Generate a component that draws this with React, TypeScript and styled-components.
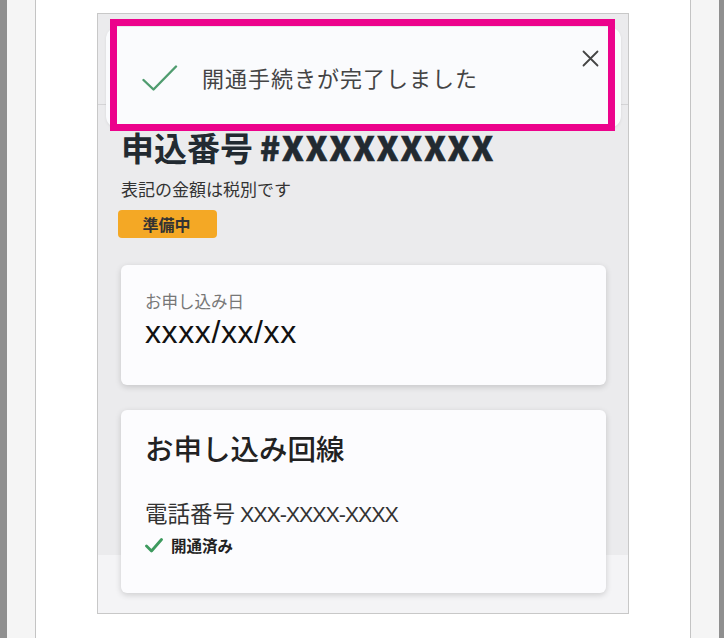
import styled, { createGlobalStyle } from "styled-components";

const GlobalStyle = createGlobalStyle`
    html, body {
        margin: 0;
        padding: 0;
        width: 724px;
        height: 638px;
        overflow: hidden;
        background: #ffffff;
        font-family: "Noto Sans CJK JP", "Noto Sans", sans-serif;
    }
`

const Screen = styled.div`
    display: flex;
    width: 724px;
    height: 638px;
`

const Strip = styled.div<{ $w: number }>`
    width: ${p => p.$w}px;
    flex: none;
    background: #8f8f8f;
`

const Gutter = styled.div<{ $side: "left" | "right" }>`
    width: 28px;
    flex: none;
    background: #f5f5f5;
    border-${p => p.$side === "left" ? "right" : "left"}: 1px solid #c4c4c4;
`

const Canvas = styled.div`
    flex: 1;
    background: #ffffff;
    padding: 13px 0 0 61px;
`

const Frame = styled.div`
    position: relative;
    width: 530px;
    height: 599px;
    border: 1px solid #c8c8c8;
    background: linear-gradient(#ebebed 541px, #f4f4f6 541px);
    overflow: hidden;
`

const Header = styled.div`
    height: 90px;
    border-bottom: 1px solid #d4d4d6;
`

const Content = styled.div`
    display: flex;
    flex-direction: column;
    align-items: flex-start;
    padding: 22px 21px 0 23px;
`

const Title = styled.h1`
    margin: 0;
    font-size: 33px;
    line-height: 40px;
    font-weight: 700;
    color: #222a31;

    span {
        margin-left: 7px;
        font-weight: 900;
        letter-spacing: 2px;
        -webkit-text-stroke: 0.6px #222a31;
    }
`

const Note = styled.p`
    margin: 10px 0 0;
    font-size: 17px;
    line-height: 24px;
    color: #333333;
`

const Badge = styled.div`
    margin: 9px 0 0 -3px;
    width: 99px;
    height: 28px;
    border-radius: 4px;
    background: #f4a825;
    color: #333333;
    font-size: 16px;
    font-weight: 700;
    display: flex;
    align-items: center;
    justify-content: center;
    padding-right: 2px;
    box-sizing: border-box;
`

const Card = styled.section<{ $h: number; $top: number; $pad: number }>`
    box-sizing: border-box;
    width: 485px;
    height: ${p => p.$h}px;
    margin: ${p => p.$top}px 0 0 0;
    padding: ${p => p.$pad}px 24px 0;
    background: #fcfcfe;
    border-radius: 6px;
    box-shadow: 0 2px 6px rgba(0, 0, 0, 0.16);
    display: flex;
    flex-direction: column;
`

const Label = styled.div`
    font-size: 16.5px;
    line-height: 22px;
    color: #777777;
`

const DateValue = styled.div`
    margin-top: 4px;
    font-family: "Liberation Sans", "Noto Sans CJK JP", sans-serif;
    font-size: 32px;
    line-height: 32px;
    letter-spacing: 0.6px;
    color: #111111;
`

const CardTitle = styled.h2`
    margin: 0;
    font-size: 28.5px;
    line-height: 36px;
    font-weight: 500;
    color: #222222;
`

const Phone = styled.div`
    margin-top: 32px;
    font-size: 22.5px;
    line-height: 28px;
    color: #333333;

    span {
        font-family: "Liberation Sans", sans-serif;
        font-size: 21.5px;
        letter-spacing: -1.1px;
    }
`

const Status = styled.div`
    margin-top: 6px;
    display: flex;
    align-items: center;
    gap: 8px;
    font-size: 15.5px;
    line-height: 20px;
    font-weight: 700;
    color: #222222;
`

const Toast = styled.div`
    position: absolute;
    top: 13px;
    left: 8px;
    width: 515px;
    height: 101px;
    border-radius: 12px;
    background: #fafbfd;
    box-shadow: 0 1px 3px rgba(0, 0, 0, 0.08);
    display: flex;
    align-items: center;
    padding: 0 0 0 36px;
    box-sizing: border-box;
    gap: 24px;
`

const ToastText = styled.span`
    font-size: 22px;
    letter-spacing: 1px;
    color: #444444;
    margin-top: -2px;
`

const CloseButton = styled.button`
    position: absolute;
    top: 20px;
    right: 20px;
    width: 22px;
    height: 22px;
    padding: 0;
    border: none;
    background: transparent;
    display: flex;
    align-items: center;
    justify-content: center;
`

const Highlight = styled.div`
    position: absolute;
    top: 5px;
    left: 12px;
    width: 505px;
    height: 112px;
    box-sizing: border-box;
    border: 7px solid #ec038c;
    pointer-events: none;
`

function Check({ size, stroke, color, w }: { size: number; stroke: number; color: string; w?: number }) {
    return (
        <svg width={w ?? size} height={size} viewBox="0 0 36 26" fill="none">
            <polyline points="1.5,15 11.5,24.5 34,1.5" stroke={color} strokeWidth={stroke} strokeLinecap="round" strokeLinejoin="round" />
        </svg>
    );
}

export default function App() {
    return (
        <>
            <GlobalStyle />
            <Screen>
                <Strip $w={7} />
                <Gutter $side="left" />
                <Canvas>
                    <Frame>
                        <Header />
                        <Content>
                            <Title>申込番号<span>#XXXXXXXXX</span></Title>
                            <Note>表記の金額は税別です</Note>
                            <Badge>準備中</Badge>
                            <Card $h={120} $top={27} $pad={25}>
                                <Label>お申し込み日</Label>
                                <DateValue>xxxx/xx/xx</DateValue>
                            </Card>
                            <Card $h={183} $top={25} $pad={20}>
                                <CardTitle>お申し込み回線</CardTitle>
                                <Phone>電話番号 <span>XXX-XXXX-XXXX</span></Phone>
                                <Status>
                                    <svg width="18" height="15" viewBox="0 0 18 15" fill="none">
                                        <polyline points="1.5,8 6.5,13 16.5,1.5" stroke="#3d9a5e" strokeWidth="2.8" strokeLinecap="round" strokeLinejoin="round" />
                                    </svg>
                                    開通済み
                                </Status>
                            </Card>
                        </Content>
                        <Toast>
                            <Check size={26} w={36} stroke={2.4} color="#4f9c6f" />
                            <ToastText>開通手続きが完了しました</ToastText>
                            <CloseButton aria-label="close">
                                <svg width="17" height="17" viewBox="0 0 17 17" fill="none">
                                    <path d="M1.5 1.5 L15.5 15.5 M15.5 1.5 L1.5 15.5" stroke="#444" strokeWidth="1.8" strokeLinecap="round" />
                                </svg>
                            </CloseButton>
                        </Toast>
                        <Highlight />
                    </Frame>
                </Canvas>
                <Gutter $side="right" />
                <Strip $w={5} />
            </Screen>
        </>
    );
}
